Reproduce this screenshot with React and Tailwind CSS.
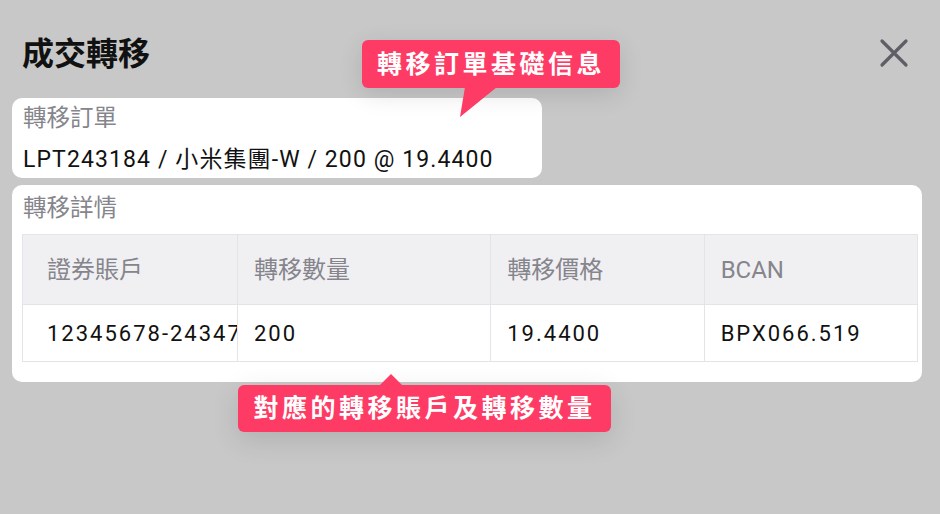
import React from 'react';

const FONT = { fontFamily: 'Roboto, "Noto Sans CJK TC", "Noto Sans", sans-serif' };

const columns = [
  { label: '證券賬戶', value: '12345678-24347890', w: 'w-[214px]', pl: 'pl-[24px]' },
  { label: '轉移數量', value: '200', w: 'w-[254px]', pl: 'pl-[16px]' },
  { label: '轉移價格', value: '19.4400', w: 'w-[214px]', pl: 'pl-[16px]' },
  { label: 'BCAN', value: 'BPX066.519', w: 'w-[214px]', pl: 'pl-[16px]' },
];

const CloseIcon = () => (
  <svg width="30" height="30" viewBox="0 0 30 30" fill="none">
    <path d="M3 3L27 27M27 3L3 27" stroke="#5f5e66" strokeWidth="3.2" strokeLinecap="round" />
  </svg>
);

export default function App() {
  return (
    <div className="relative w-[940px] h-[514px] bg-[#c8c8c8] overflow-hidden" style={FONT}>
      {/* header */}
      <div className="flex justify-between items-start pl-[22px] pr-[31px] pt-[34px] h-[98px]">
        <h1 className="text-[32px] leading-[40px] font-bold text-[#111]">成交轉移</h1>
        <div className="pt-[4px]">
          <CloseIcon />
        </div>
      </div>

      {/* transfer order */}
      <div className="ml-[12px] w-[530px] h-[80px] bg-white rounded-[10px] pl-[11px] pt-[5px]">
        <div className="text-[23.5px] leading-[30px] text-[#86858c]">轉移訂單</div>
        <div className="mt-[12px] text-[23px] leading-[30px] text-[#111] tracking-[1.1px]">
          LPT243184 / 小米集團-W / 200 @ 19.4400
        </div>
      </div>

      {/* transfer details */}
      <div className="ml-[12px] mt-[7px] w-[910px] bg-white rounded-[10px] pl-[10px] pr-[4px] pt-[8px] pb-[20px]">
        <div className="pl-[1px] text-[23.5px] leading-[30px] text-[#86858c]">轉移詳情</div>
        <div className="mt-[11px] flex border border-[#e4e4e8]">
          {columns.map((c, i) => (
            <div key={c.label} className={`${c.w} flex flex-col ${i > 0 ? 'border-l border-[#e4e4e8]' : ''}`}>
              <div className={`h-[69px] bg-[#f0f0f3] flex items-center ${c.pl} text-[24px] text-[#86858c] whitespace-nowrap`}>
                {c.label}
              </div>
              <div className={`h-[57px] border-t border-[#e4e4e8] flex items-center ${c.pl} text-[22px] text-[#111] tracking-[2px] whitespace-nowrap overflow-hidden`}>
                {c.value}
              </div>
            </div>
          ))}
        </div>
      </div>

      {/* tooltip 1 */}
      <div className="absolute left-[362px] top-[40px] w-[258px] h-[48px] bg-[#fe3b64] rounded-[6px] flex items-center justify-center shadow-[0_6px_24px_rgba(0,0,0,0.12)]">
        <span className="text-white font-bold text-[25px] tracking-[3.5px] leading-none">轉移訂單基礎信息</span>
        <svg className="absolute left-[96px] top-[47px]" width="40" height="32" viewBox="0 0 40 32">
          <polygon points="7,0 39,0 2,30" fill="#fe3b64" />
        </svg>
      </div>

      {/* tooltip 2 */}
      <div className="absolute left-[238px] top-[385px] w-[373px] h-[47px] bg-[#fe3b64] rounded-[6px] flex items-center justify-center shadow-[0_8px_28px_rgba(0,0,0,0.12)]">
        <span className="text-white font-bold text-[25px] tracking-[3.5px] leading-none">對應的轉移賬戶及轉移數量</span>
        <svg className="absolute left-[141px] top-[-12px]" width="24" height="13" viewBox="0 0 24 13">
          <polygon points="0,13 12,1 24,13" fill="#fe3b64" />
        </svg>
      </div>
    </div>
  );
}
